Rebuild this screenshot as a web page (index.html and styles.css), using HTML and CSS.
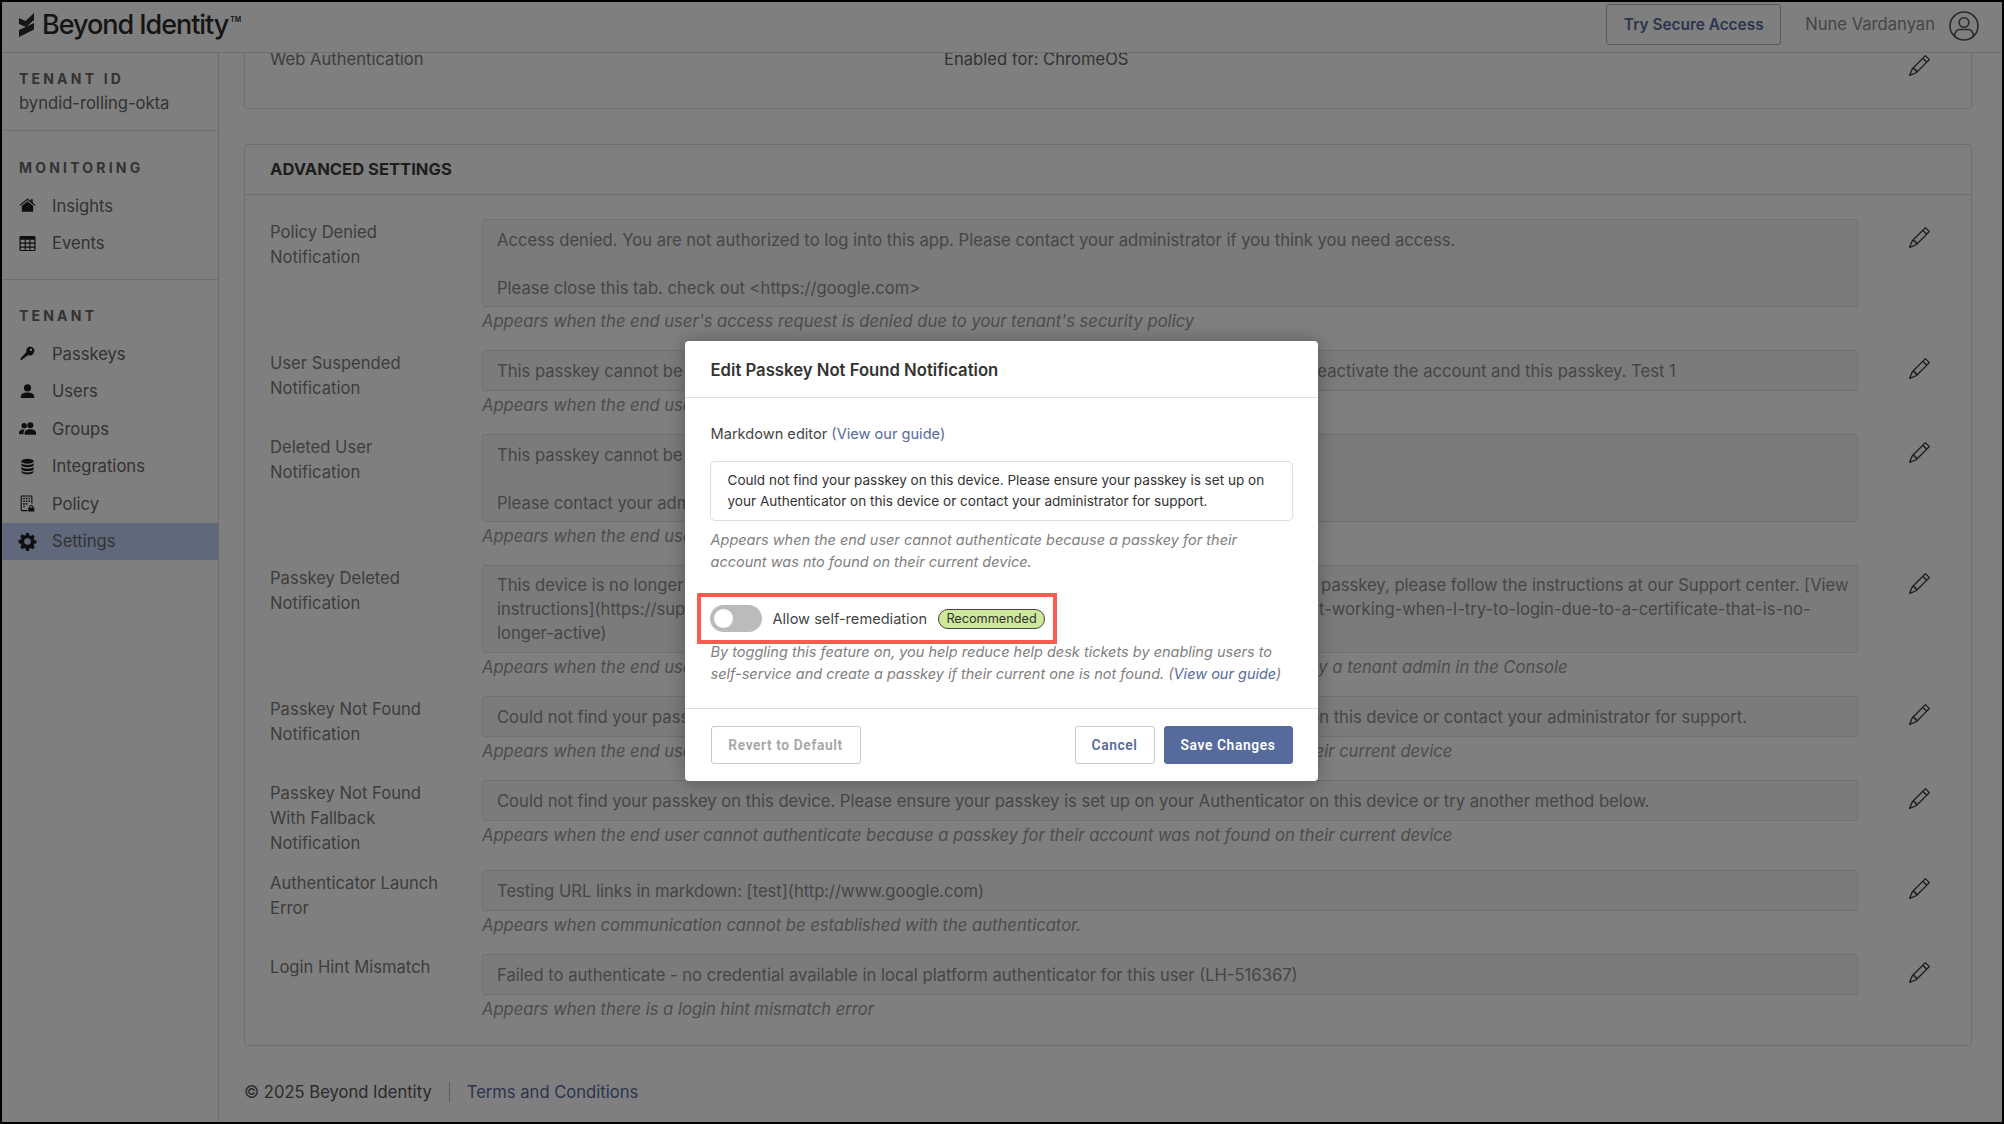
FILE: index.html
```html
<!DOCTYPE html>
<html lang="en">
<head>
<meta charset="utf-8">
<title>Beyond Identity</title>
<link rel="stylesheet" href="styles.css">
</head>
<body>
<svg class="sprite" aria-hidden="true">
  <symbol id="pencil" viewBox="0 0 16 16"><path d="M12.146.146a.5.5 0 0 1 .708 0l3 3a.5.5 0 0 1 0 .708l-10 10a.5.5 0 0 1-.168.11l-5 2a.5.5 0 0 1-.65-.65l2-5a.5.5 0 0 1 .11-.168l10-10zM11.207 2.5 13.5 4.793 14.793 3.5 12.5 1.207 11.207 2.5zm1.586 3L10.5 3.207 4 9.707V10h.5a.5.5 0 0 1 .5.5v.5h.5a.5.5 0 0 1 .5.5v.5h.293l6.5-6.5zm-9.761 5.175-.106.106-1.528 3.821 3.821-1.528.106-.106A.5.5 0 0 1 5 12.5V12h-.5a.5.5 0 0 1-.5-.5V11h-.5a.5.5 0 0 1-.468-.325z"/></symbol>
</svg>
<div class="frame">
  <header class="topbar">
    <div class="brand">
      <svg class="brand-mark" viewBox="0 0 15 24"><path d="M0 5l6.500 3L15 0v7L7 14 0 11zM15 10v6.500L0 24v-7z"/></svg>
      <span class="brand-name">Beyond Identity</span><span class="brand-tm">TM</span>
    </div>
    <button class="try-btn">Try Secure Access</button>
    <span class="user-name">Nune Vardanyan</span>
    <svg class="user-icon" viewBox="0 0 30 30" fill="none" stroke="currentColor" stroke-width="1.600"><circle cx="15" cy="15" r="14"/><circle cx="15" cy="11.500" r="4.800"/><path d="M5.500 25c.5-5 3-6.500 5.500-6.500h8c2.500 0 5 1.500 5.500 6.500"/></svg>
  </header>
  <div class="body">
    <nav class="sidebar">
      <section class="side-block tenant-id">
        <div class="side-head">TENANT ID</div>
        <div class="tenant-value">byndid-rolling-okta</div>
      </section>
      <section class="side-block">
        <div class="side-head">MONITORING</div>
        <a class="nav-item"><svg class="nav-icon" viewBox="0 0 18 18"><path d="M9 1.500l3.500 2.800V2.500h2v3.400L17.500 8.500l-.8.8L9 3.200 1.300 9.300l-.8-.8z"/><path d="M9 4.500l6 4.800V15.500H3V9.300z"/></svg>Insights</a>
        <a class="nav-item"><svg class="nav-icon" viewBox="0 0 18 18"><path fill-rule="evenodd" d="M2 1h14a1.500 1.500 0 0 1 1.500 1.500v13A1.500 1.500 0 0 1 16 17H2a1.500 1.500 0 0 1-1.500-1.500v-13A1.500 1.500 0 0 1 2 1zm-.2 4v3h4.200V5zm5.400 0v3h3.800V5zm5 0v3h4V5zM1.800 9.200v3h4.200v-3zm5.400 0v3h3.800v-3zm5 0v3h4v-3zM1.800 13.400v2.400h4.200v-2.400zm5.400 0v2.400h3.800v-2.400zm5 0v2.400h4v-2.400z"/></svg>Events</a>
      </section>
      <section class="side-block last">
        <div class="side-head">TENANT</div>
        <a class="nav-item"><svg class="nav-icon" viewBox="0 0 18 18"><path fill-rule="evenodd" d="M11.500 1.500a4.800 4.800 0 1 1-1.900 9.200L7.800 12.500H6v1.800H4.300L3 16H1.700v-1.700l6.100-6.900a4.800 4.800 0 0 1 3.700-5.900zm1.200 2.200a1.300 1.300 0 1 0 0 2.600 1.300 1.300 0 0 0 0-2.600z"/></svg>Passkeys</a>
        <a class="nav-item"><svg class="nav-icon" viewBox="0 0 18 18"><circle cx="9" cy="5.200" r="3.800"/><path d="M2 16v-2c0-2.500 2.500-4 7-4s7 1.500 7 4v2z"/></svg>Users</a>
        <a class="nav-item"><svg class="nav-icon" viewBox="0 0 18 18"><circle cx="5.500" cy="6" r="2.800"/><circle cx="12" cy="5.500" r="3.200"/><path d="M0 15v-1.500c0-2 1.800-3.500 4-3.500 1 0 1.800.2 2.200.6C5 11.500 4.700 13 4.700 15z"/><path d="M6 15.500v-2c0-2.200 2.500-3.800 6-3.800s6 1.600 6 3.800v2z"/></svg>Groups</a>
        <a class="nav-item"><svg class="nav-icon" viewBox="0 0 18 18"><ellipse cx="9" cy="3.500" rx="6.500" ry="2.700"/><path d="M2.500 5.300C3.500 6.800 6 7.300 9 7.300s5.500-.5 6.500-2V7.800c-1 1.500-3.500 2-6.500 2s-5.500-.5-6.500-2z"/><path d="M2.500 9.300c1 1.500 3.500 2 6.500 2s5.500-.5 6.500-2v2.500c-1 1.500-3.500 2-6.500 2s-5.500-.5-6.500-2z"/><path d="M2.500 13.300c1 1.500 3.500 2 6.500 2s5.500-.5 6.500-2v1.500c-1 1.700-3.500 2.500-6.500 2.500s-5.500-.8-6.500-2.500z"/></svg>Integrations</a>
        <a class="nav-item"><svg class="nav-icon" viewBox="0 0 18 18"><path fill-rule="evenodd" d="M3 .5h10A1.200 1.200 0 0 1 14.200 1.700V9H13V1.700H3V16h6v1.200H3a1.200 1.200 0 0 1-1.200-1.200V1.700A1.200 1.200 0 0 1 3 .5z"/><path d="M4.500 3h1.600v1.600H4.500zM7.200 3h1.600v1.600H7.200zM10 3h1.600v1.600H10zM4.500 5.800h1.600v1.600H4.500zM7.200 5.800h1.600v1.600H7.200zM10 5.800h1.600v1.600H10zM4.500 8.600h1.600v1.600H4.500zM7.200 8.600h1.600v1.600H7.200zM4.500 11.400h1.600V13H4.500z"/><path fill-rule="evenodd" d="M13 10.500a2.300 2.300 0 0 1 2.300 2.300v.7h.9v4h-6.400v-4h.9v-.7A2.300 2.300 0 0 1 13 10.500zm0 1.100a1.200 1.200 0 0 0-1.200 1.200v.7h2.400v-.7a1.200 1.200 0 0 0-1.200-1.200z"/></svg>Policy</a>
        <a class="nav-item active"><svg class="nav-icon" viewBox="0 0 18 18"><path fill-rule="evenodd" d="M7.500.5h3l.5 2.400 1.500.7 2.100-1.300 2.100 2.100-1.300 2.100.7 1.500 2.400.5v3l-2.400.5-.7 1.500 1.300 2.100-2.100 2.100-2.100-1.300-1.500.7-.5 2.400h-3l-.5-2.400-1.500-.7-2.100 1.300-2.100-2.100 1.300-2.100-.7-1.500L-.5 11V8l2.400-.5.7-1.500L1.300 3.900l2.100-2.100 2.100 1.300L7 2.900zM9 6a3.500 3.500 0 1 0 0 7 3.500 3.500 0 0 0 0-7z" transform="translate(0 -.5)"/></svg>Settings</a>
      </section>
    </nav>
    <main class="main">
      <section class="card card-clipped">
        <div class="web-row">
          <span class="web-label">Web Authentication</span>
          <span class="web-value">Enabled for: ChromeOS</span>
          <svg class="pencil"><use href="#pencil"/></svg>
        </div>
      </section>
      <section class="card">
        <h2 class="card-title">ADVANCED SETTINGS</h2>
        <div class="card-body">
          <div class="row">
            <div class="row-label">Policy Denied Notification</div>
            <div class="row-field"><div class="fake-input tall">Access denied. You are not authorized to log into this app. Please contact your administrator if you think you need access.

Please close this tab. check out &lt;https://google.com&gt;</div><div class="hint">Appears when the end user's access request is denied due to your tenant's security policy</div></div>
            <svg class="pencil"><use href="#pencil"/></svg>
          </div>
          <div class="row">
            <div class="row-label">User Suspended Notification</div>
            <div class="row-field"><div class="fake-input">This passkey cannot be used because your account is suspended. Please contact your administrator to reactivate the account and this passkey. Test 1</div><div class="hint">Appears when the end user has been suspended</div></div>
            <svg class="pencil"><use href="#pencil"/></svg>
          </div>
          <div class="row">
            <div class="row-label">Deleted User Notification</div>
            <div class="row-field"><div class="fake-input tall">This passkey cannot be used because your account has been deleted.

Please contact your administrator.</div><div class="hint">Appears when the end user has been deleted</div></div>
            <svg class="pencil"><use href="#pencil"/></svg>
          </div>
          <div class="row">
            <div class="row-label">Passkey Deleted Notification</div>
            <div class="row-field"><div class="fake-input tall compact">This device is no longer able to use this passkey because it has been deleted. To register a new device's passkey, please follow the instructions at our Support center. [View
instructions](https://support.beyondidentity.com/hc/en-us/articles/123456789012345-my-passkey-is-not-working-when-I-try-to-login-due-to-a-certificate-that-is-no-
longer-active)</div><div class="hint">Appears when the end user cannot authenticate because their passkey on their device has been deleted by a tenant admin in the Console</div></div>
            <svg class="pencil"><use href="#pencil"/></svg>
          </div>
          <div class="row">
            <div class="row-label">Passkey Not Found Notification</div>
            <div class="row-field"><div class="fake-input">Could not find your passkey on this device. Please ensure your passkey is set up on your Authenticator on this device or contact your administrator for support.</div><div class="hint">Appears when the end user cannot authenticate because a passkey for their account was not found on their current device</div></div>
            <svg class="pencil"><use href="#pencil"/></svg>
          </div>
          <div class="row">
            <div class="row-label">Passkey Not Found With Fallback Notification</div>
            <div class="row-field"><div class="fake-input">Could not find your passkey on this device. Please ensure your passkey is set up on your Authenticator on this device or try another method below.</div><div class="hint">Appears when the end user cannot authenticate because a passkey for their account was not found on their current device</div></div>
            <svg class="pencil"><use href="#pencil"/></svg>
          </div>
          <div class="row">
            <div class="row-label">Authenticator Launch Error</div>
            <div class="row-field"><div class="fake-input">Testing URL links in markdown: [test](http://www.google.com)</div><div class="hint">Appears when communication cannot be established with the authenticator.</div></div>
            <svg class="pencil"><use href="#pencil"/></svg>
          </div>
          <div class="row">
            <div class="row-label">Login Hint Mismatch</div>
            <div class="row-field"><div class="fake-input">Failed to authenticate - no credential available in local platform authenticator for this user (LH-516367)</div><div class="hint">Appears when there is a login hint mismatch error</div></div>
            <svg class="pencil"><use href="#pencil"/></svg>
          </div>
        </div>
      </section>
      <footer class="page-footer">
        <span>© 2025 Beyond Identity</span>
        <a class="terms">Terms and Conditions</a>
      </footer>
    </main>
  </div>
  <div class="overlay">
    <div class="modal">
      <div class="modal-head">Edit Passkey Not Found Notification</div>
      <div class="modal-body">
        <div class="md-label">Markdown editor <a class="link">(View our guide)</a></div>
        <div class="md-box">Could not find your passkey on this device. Please ensure your passkey is set up on your Authenticator on this device or contact your administrator for support.</div>
        <div class="modal-hint">Appears when the end user cannot authenticate because a passkey for their account was nto found on their current device.</div>
        <div class="toggle-row">
          <span class="toggle"><span class="knob"></span></span>
          <span class="toggle-label">Allow self-remediation</span>
          <span class="badge">Recommended</span>
        </div>
        <div class="modal-hint tight">By toggling this feature on, you help reduce help desk tickets by enabling users to self-service and create a passkey if their current one is not found. (<a class="link">View our guide</a>)</div>
      </div>
      <div class="modal-foot">
        <button class="btn btn-muted">Revert to Default</button>
        <button class="btn btn-cancel">Cancel</button>
        <button class="btn btn-save">Save Changes</button>
      </div>
    </div>
  </div>
</div>
</body>
</html>
```
FILE: styles.css
```css
* { box-sizing: border-box; }
html, body { margin: 0; height: 100%; }
body { font-family: Inter, "Liberation Sans", sans-serif; font-size: 16.600px; color: #666; background: #000; }
.sprite { display: none; }
.frame { position: relative; width: 2004px; height: 1124px; border: 2px solid #000; background: #fff; display: flex; flex-direction: column; overflow: hidden; }

.topbar { height: 51px; flex: none; display: flex; align-items: center; padding: 0 23px 0 17px; background: #fff; border-bottom: 1px solid #dcdcdc; position: relative; z-index: 1; }
.brand { display: flex; align-items: center; margin-right: auto; color: #2b2b2b; position: relative; top: -2px; }
.brand-mark { width: 15px; height: 24px; fill: currentColor; margin-right: 8px; }
.brand-name { font-size: 27px; font-weight: 500; letter-spacing: -1.050px; line-height: 30px; }
.brand-tm { font-size: 7px; font-weight: 600; align-self: flex-start; margin: 5px 0 0 2px; }
.try-btn { width: 175px; height: 41px; margin: 0 24px 0 0; background: #fff; border: 1px solid #b5b5b5; border-radius: 3px; font: 600 15.400px Inter, sans-serif; color: #566b9c; position: relative; top: -2.500px; }
.user-name { color: #8a8a8a; margin-right: 14px; position: relative; top: -3px; }
.user-icon { width: 30px; height: 30px; color: #555; position: relative; top: -1px; }

.body { flex: 1; display: flex; min-height: 0; }
.sidebar { width: 217px; flex: none; border-right: 1px solid #d9d9d9; color: #5f5f5f; }
.side-block { padding: 25px 0 17px; border-bottom: 1px solid #dcdcdc; }
.side-block.tenant-id { padding: 14px 0 15px 17px; }
.side-block.last { border: 0; padding-top: 24px; }
.side-head { font-size: 14px; font-weight: 700; letter-spacing: 3.200px; line-height: 24px; color: #666; padding-left: 17px; margin-bottom: 7px; }
.tenant-id .side-head { padding: 0; margin: 0; }
.tenant-value { line-height: 24px; color: #666; }
.nav-item { display: flex; align-items: center; height: 37.500px; padding-left: 17px; color: #666; }
.nav-icon { width: 17px; height: 17px; margin-right: 16px; fill: #1e1e1e; overflow: visible; }
.nav-item.active { background: #bfd3f6; }

.main { flex: 1; min-width: 0; overflow: hidden; padding: 0 30px 0 25px; }
.card { border: 1px solid #dedede; border-radius: 3px; margin-bottom: 35px; background: #fff; }
.card-clipped { margin-top: -40px; padding: 33px 41px 32px 25px; }
.web-row { display: flex; align-items: flex-start; line-height: 25px; color: #7a7a7a; }
.web-label { width: 674px; }
.web-value { color: #666; flex: 1; }
.web-row .pencil { margin: 8px 0 0 50px; }
.card-title { margin: 0; height: 50px; line-height: 49px; padding-left: 25px; border-bottom: 1px solid #dedede; font-size: 16.600px; font-weight: 700; color: #3c3c3c; }
.card-body { padding: 24px 41px 23px 25px; display: flex; flex-direction: column; gap: 16px; }
.row { display: flex; align-items: flex-start; }
.row-label { width: 212px; flex: none; padding: 1px 30px 0 0; margin-bottom: -2px; line-height: 25px; color: #7a7a7a; }
.row-field { flex: 1; min-width: 0; }
.fake-input { min-height: 41px; padding: 8px 8px 7px 14px; background: #f6f6f6; border: 1px solid #e0e0e0; border-radius: 3px; color: #8c8c8c; line-height: 24px; white-space: pre-line; }
.fake-input.tall { height: 88px; }
.fake-input.compact { padding-top: 7px; }
.hint { height: 27px; line-height: 27px; font-style: italic; color: #999; padding-top: 1px; }
.pencil { width: 21px; height: 21px; margin: 8px 0 0 51px; flex: none; fill: #3a3a3a; }
.page-footer { display: flex; align-items: center; height: 25px; color: #555; margin-top: -2px; }
.terms { color: #566b9c; margin-left: 17px; padding-left: 17px; border-left: 1px solid #bbb; line-height: 20px; }

.overlay { position: absolute; inset: 0; padding-right: 2px; background: rgba(0,0,0,.5); display: flex; justify-content: center; align-items: flex-start; z-index: 5; }
.modal { width: 633px; margin-top: 339px; background: #fff; border-radius: 4px; box-shadow: 0 0 18px rgba(0,0,0,.3); color: #333; }
.modal-head { height: 57px; line-height: 58px; padding-left: 26px; border-bottom: 1px solid #dedede; font-size: 16.700px; font-weight: 600; color: #333; }
.modal-body { padding: 25px 25px 23px 26px; position: relative; }
.md-label { font-size: 14.600px; line-height: 22px; color: #444; }
.link { color: #566b9c; }
.md-box { margin: 16px 0 0 -1px; height: 60px; padding: 8px 17px; border: 1px solid #dedede; border-radius: 5px; font-size: 13.560px; line-height: 21px; color: #333; }
.modal-hint { font-size: 14.500px; line-height: 22px; font-style: italic; color: #808080; margin-top: 8px; }
.modal-hint.tight { margin-top: -3px; }
.toggle-row { display: flex; align-items: center; width: 360px; height: 51px; margin: 20px 0 0 -14px; padding-left: 9px; border: 4px solid #ff5a4f; }
.toggle { width: 52px; height: 27px; border-radius: 14px; background: #bbb; display: flex; align-items: center; padding-left: 4px; flex: none; }
.knob { width: 19px; height: 19px; border-radius: 50%; background: #fff; }
.toggle-label { margin-left: 11px; font-size: 14.600px; color: #444; }
.badge { margin-left: 11px; height: 20px; width: 107px; line-height: 18px; text-align: center; font-size: 12.700px; color: #333; background: #cfe99a; border: 1px solid #444; border-radius: 10px; }
.modal-foot { display: flex; gap: 9px; height: 73px; align-items: flex-start; padding: 17px 25px 0 26px; border-top: 1px solid #dedede; }
.btn { height: 38px; padding-bottom: 2px; border-radius: 3px; font: 600 13.800px Roboto, sans-serif; letter-spacing: .6px; }
.btn-muted { width: 150px; margin-right: auto; background: #fff; border: 1px solid #c9c9c9; color: #a5a5a5; }
.btn-cancel { width: 80px; background: #fff; border: 1px solid #c9c9c9; color: #566b9c; }
.btn-save { width: 129px; background: #566b9c; border: 1px solid #566b9c; color: #fff; }
```
